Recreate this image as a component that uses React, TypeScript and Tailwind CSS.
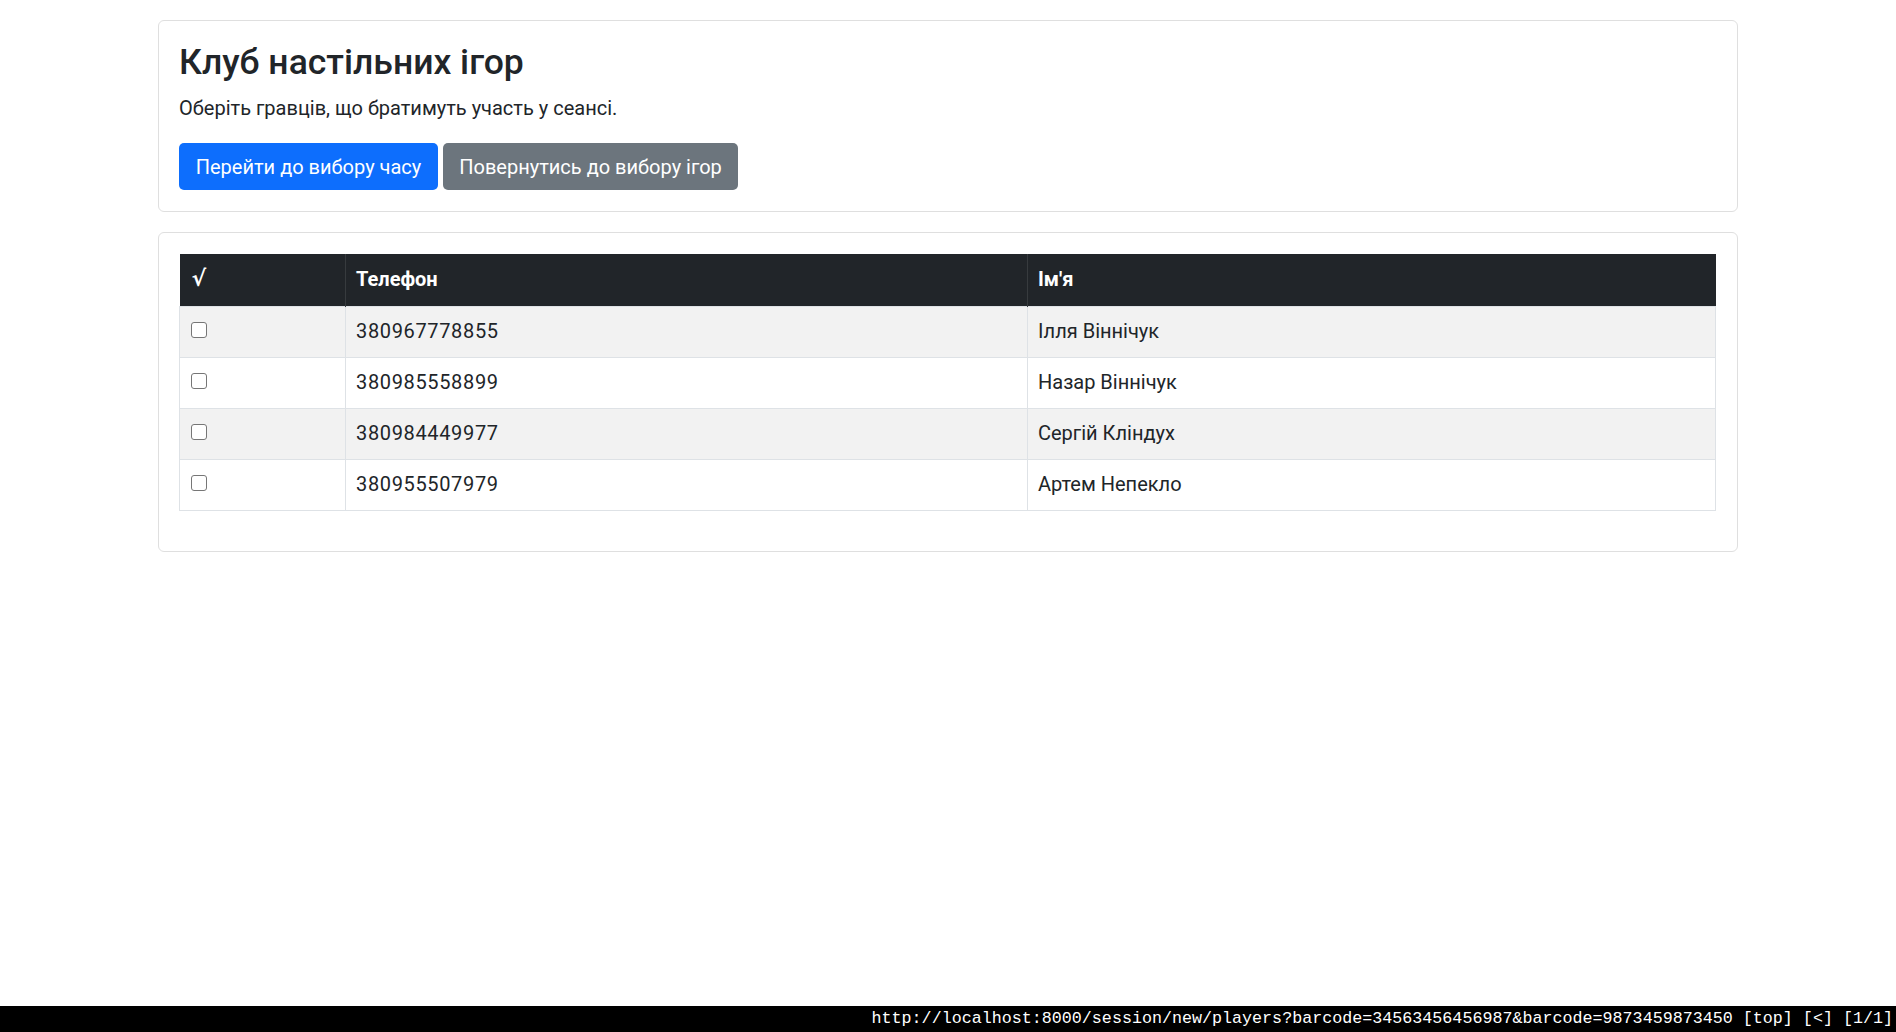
import React from "react";

const rows = [
  { phone: "380967778855", name: "Ілля Віннічук" },
  { phone: "380985558899", name: "Назар Віннічук" },
  { phone: "380984449977", name: "Сергій Кліндух" },
  { phone: "380955507979", name: "Артем Непекло" },
];

export default function App() {
  return (
    <div
      className="w-[1896px] h-[1032px] bg-white text-[#212529] flex flex-col"
      style={{ fontFamily: "Roboto, 'Noto Sans', sans-serif" }}
    >
      <div className="flex-1 pt-[20px] pl-[158px] w-[1738px] flex flex-col gap-[20px]">
        <div className="border border-[#dfdfdf] rounded-[6px] pt-[21px] pb-[20px] px-[20px] h-[192px]">
          <h1 className="text-[35.5px] leading-[40px] font-medium m-0">Клуб настільних ігор</h1>
          <p className="text-[20px] leading-[29px] mt-[12px]">Оберіть гравців, що братимуть участь у сеансі.</p>
          <div className="flex gap-[5px] mt-[20px]">
            <button className="bg-[#0d6efd] text-white text-[20px] h-[47px] w-[259px] whitespace-nowrap rounded-[5px]">
              Перейти до вибору часу
            </button>
            <button className="bg-[#6c757d] text-white text-[20px] h-[47px] w-[295px] whitespace-nowrap rounded-[5px]">
              Повернутись до вибору ігор
            </button>
          </div>
        </div>
        <div className="border border-[#dfdfdf] rounded-[6px] pt-[21px] px-[20px] pb-[40px]">
          <table className="w-[1537px] border-collapse text-[20px] table-fixed">
            <colgroup>
              <col className="w-[166px]" />
              <col className="w-[682px]" />
              <col />
            </colgroup>
            <thead>
              <tr className="bg-[#212529] text-white h-[52px]">
                <th className="text-left font-bold px-[12px] pb-[2px] border-r border-[#373b3e] text-[22px]" style={{ fontFamily: "'DejaVu Sans', sans-serif" }}>√</th>
                <th className="text-left font-bold px-[10px] pb-[2px] border-r border-[#373b3e]">Телефон</th>
                <th className="text-left font-bold px-[10px] pb-[2px]">Ім'я</th>
              </tr>
            </thead>
            <tbody>
              {rows.map((r, i) => (
                <tr key={r.phone} className={(i % 2 === 0 ? "bg-[#f2f2f2]" : "bg-white") + " h-[51px]"}>
                  <td className="px-[11px] border border-[#dee2e6]">
                    <div className="w-[16px] h-[16px] -mt-[3px] rounded-[3px] border border-[#767676] bg-white" />
                  </td>
                  <td className="px-[10px] pb-[1px] border border-[#dee2e6] tracking-[0.65px]">{r.phone}</td>
                  <td className="px-[10px] pb-[1px] border border-[#dee2e6]">{r.name}</td>
                </tr>
              ))}
            </tbody>
          </table>
        </div>
      </div>
      <div
        className="h-[26px] bg-black text-white text-[16.7px] leading-[26px] text-right pr-[3px] whitespace-nowrap"
        style={{ fontFamily: "'Liberation Mono', monospace" }}
      >
        http://localhost:8000/session/new/players?barcode=34563456456987&amp;barcode=9873459873450 [top] [&lt;] [1/1]
      </div>
    </div>
  );
}
